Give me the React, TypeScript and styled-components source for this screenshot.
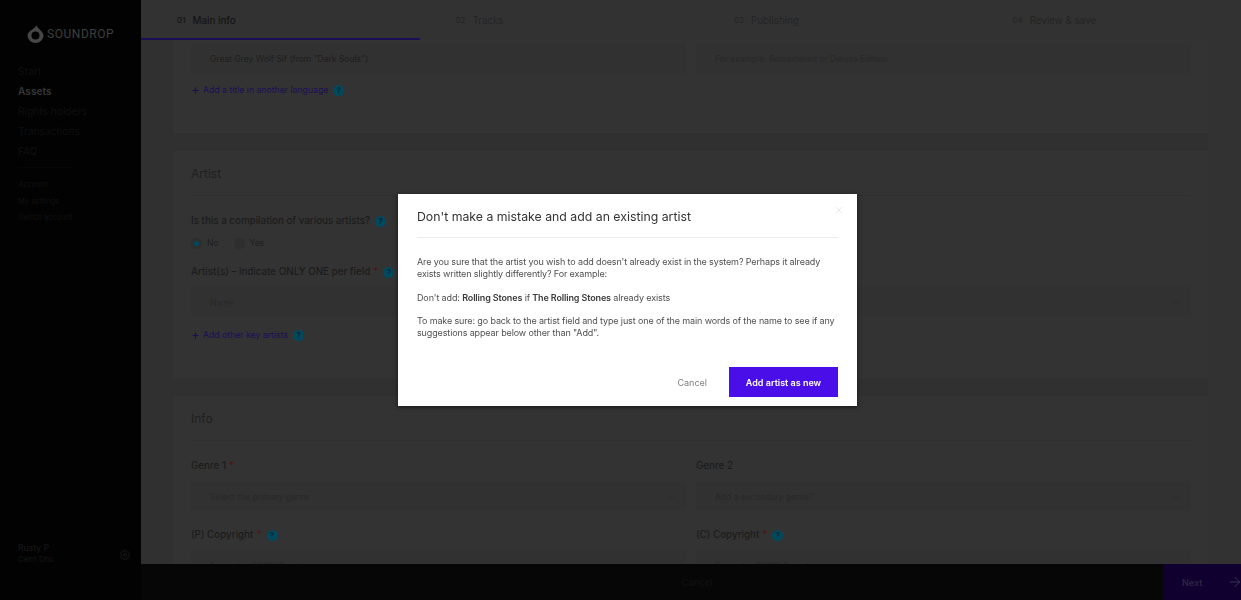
import React from "react";
import styled, { createGlobalStyle } from "styled-components";
import { Settings, ChevronDown, X, ArrowRight, Plus } from "lucide-react";

const Global = createGlobalStyle`
  html, body { margin: 0; padding: 0; height: 100%; background: #303030; }
  body { font-family: Inter, "Liberation Sans", sans-serif; overflow: hidden; }
  #root { height: 600px; }
  * { box-sizing: border-box; }
`;

const Page = styled.div`display: flex; width: 1241px; height: 600px; overflow: hidden;`;

const Sidebar = styled.aside`
  width: 141px; flex: none; background: #020202; padding: 24px 0 0 18px;
  display: flex; flex-direction: column; height: 600px;
`;
const Logo = styled.div`display: flex; align-items: center; gap: 3px; margin-left: 9px; height: 20px; margin-bottom: 17px;`;
const LogoText = styled.span`
  font-family: Roboto, sans-serif; font-size: 12px; letter-spacing: 0.55px; color: #3e3e3e; line-height: 20px;
`;
const NavItem = styled.div<{ $active?: boolean }>`
  font-size: 10.2px; line-height: 20px; height: 20px; color: ${p => (p.$active ? "#363636" : "#0f0f0f")};
  font-weight: ${p => (p.$active ? 600 : 400)};
`;
const NavDivider = styled.div`width: 54px; height: 1px; background: #060606; margin: 6px 0 9px;`;
const SubItem = styled.div`font-size: 7.5px; line-height: 16.5px; height: 16.5px; color: #111111;`;
const UserBlock = styled.div`margin-top: auto; margin-bottom: 34px; display: flex; align-items: center; justify-content: space-between; padding-right: 10px;`;
const UserName = styled.div`font-size: 8.5px; line-height: 12px; color: #161616; font-weight: 500;`;
const UserOrg = styled.div`font-size: 7.5px; line-height: 12px; color: #161616;`;
const Gear = styled(Settings)`color: #181818; margin-top: 2px;`;

const Main = styled.main`flex: 1; min-width: 0; display: flex; flex-direction: column; height: 600px;`;
const Tabs = styled.nav`display: flex; height: 40px; flex: none; background: #323232; overflow: hidden;`;
const Tab = styled.div<{ $active?: boolean }>`
  width: 278.5px; flex: none; padding: 2px 0 0 36px; display: flex; align-items: center; gap: 7px; height: 40px;
  border-bottom: 2px solid ${p => (p.$active ? "#1c0f58" : "#323232")};
  font-size: 9.8px; color: ${p => (p.$active ? "#141414" : "#242424")}; font-weight: ${p => (p.$active ? 500 : 400)};
`;
const TabNum = styled.span`font-size: 8px;`;

const Scroll = styled.div`flex: 1; min-height: 0; overflow: hidden; display: flex; background: #303030;`;
const Content = styled.div`flex: 1; min-width: 0; padding: 0 0 0 32px; display: flex; flex-direction: column; gap: 18px;`;
const Gutter = styled.div`width: 33px; flex: none; background: #323232;`;
const Card = styled.section<{ $h: number }>`
  background: #333333; padding: 0 17px 0 18px; height: ${p => p.$h}px; flex: none;
`;
const CardTitle = styled.h2`
  margin: 0 0 18px; font-size: 12px; font-weight: 400; color: #202020; height: 45px; line-height: 45px;
  border-bottom: 1px solid #2f2f2f;
`;
const Row = styled.div`display: grid; grid-template-columns: 495px 495px; column-gap: 10px;`;
const Label = styled.div`
  display: flex; align-items: center; gap: 5px; font-size: 9.8px; font-weight: 500; color: #1c1c1c; line-height: 14px; height: 14px;
`;
const Spacer = styled.div<{ $h: number }>`height: ${p => p.$h}px;`;
const Star = styled.span`color: #501414; margin-left: -2px;`;
const Help = styled.span`
  width: 11px; height: 11px; border-radius: 50%; background: #00495f; color: #10262e; font-size: 8px; font-weight: 700;
  display: inline-flex; align-items: center; justify-content: center; line-height: 1; flex: none;
`;
const Field = styled.div<{ $mt?: number }>`
  height: 30px; background: #313131; padding: 1px 10px 0 19px; display: flex; align-items: center; justify-content: space-between;
  margin-top: ${p => p.$mt ?? 0}px; font-size: 8.5px; color: #282828;
`;
const FieldValue = styled.span`color: #1e1e1e;`;
const Chevron = styled(ChevronDown)`color: #282828;`;
const AddLink = styled.div<{ $mt: number }>`
  display: flex; align-items: center; gap: 3px; margin-top: ${p => p.$mt}px; font-size: 8.7px; color: #1c0f58; height: 12px;
`;
const AddHelp = styled(Help)`margin-left: 2px;`;
const RadioRow = styled.div`display: flex; align-items: center; gap: 15px; margin-top: 8px; height: 14px;`;
const RadioItem = styled.div`display: flex; align-items: center; gap: 5px; font-size: 8.5px; color: #1e1e1e;`;
const Radio = styled.span<{ $on?: boolean }>`
  width: 11px; height: 11px; border-radius: 50%; background: #2e2e2e; display: inline-flex; align-items: center; justify-content: center;
  &::after { content: ""; width: 5px; height: 5px; border-radius: 50%; background: ${p => (p.$on ? "#00495f" : "transparent")}; }
`;

const Bottom = styled.footer`height: 36px; flex: none; background: #060606; display: flex;`;
const BottomCancel = styled.div`flex: 1; display: flex; align-items: center; justify-content: center; font-size: 9.5px; color: #121212; padding-left: 90px;`;
const NextBtn = styled.div`
  width: 78px; flex: none; background: #0f0030; color: #2a2540; font-size: 9px; font-weight: 600; display: flex; align-items: center; padding-left: 19px; gap: 25px; overflow: hidden;
`;
const NextArrow = styled(ArrowRight)`color: #3a3650; flex: none;`;

const Backdrop = styled.div`position: fixed; inset: 0; display: flex; align-items: center; justify-content: center; padding-left: 14px;`;
const Modal = styled.div`
  position: relative; width: 459px; height: 212px; background: #fff; padding: 0 19px; box-shadow: 0 1px 4px rgba(0,0,0,.6); display: flex; flex-direction: column;
`;
const ModalTitle = styled.h3`
  margin: 0; height: 44px; line-height: 45px; font-size: 12.3px; font-weight: 400; color: #333; border-bottom: 1px solid #ececec; flex: none;
`;
const CloseBtn = styled(X)`position: absolute; top: 11px; right: 13px; color: #d8d8d8;`;
const ModalBody = styled.div`padding-top: 18px; font-size: 9px; letter-spacing: -0.13px; line-height: 12px; color: #505050; flex: 1;`;
const Para = styled.p<{ $mb?: number }>`margin: 0 0 ${p => p.$mb ?? 12}px;`;
const Strong = styled.strong`font-weight: 600; color: #3a3a3a;`;
const ModalFoot = styled.div`display: flex; align-items: center; justify-content: flex-end; gap: 22px; margin: 0 0 9px;`;
const ModalCancel = styled.span`font-size: 9px; color: #808080;`;
const Primary = styled.div`
  width: 109px; height: 30px; background: #4a0fe8; color: #fff; font-size: 9px; font-weight: 600; display: flex; align-items: center; justify-content: center;
`;

const tabs = ["Main info", "Tracks", "Publishing", "Review & save"];

export default function App() {
  return (
    <>
      <Global />
      <Page>
        <Sidebar>
          <Logo>
            <svg width="17" height="18" viewBox="0 0 17 18" aria-hidden>
              <path fillRule="evenodd" fill="#474747" d="M9.5 0C9.5 3 16.5 6 16.5 10.5a8 7.5 0 0 1-16 0C.5 6 8 4 9.5 0ZM8.5 6.5a4 4 0 1 0 0 8 4 4 0 0 0 0-8Z" />
            </svg>
            <LogoText>SOUNDROP</LogoText>
          </Logo>
          <NavItem>Start</NavItem>
          <NavItem $active>Assets</NavItem>
          <NavItem>Rights holders</NavItem>
          <NavItem>Transactions</NavItem>
          <NavItem>FAQ</NavItem>
          <NavDivider />
          <SubItem>Account</SubItem>
          <SubItem>My settings</SubItem>
          <SubItem>Switch account</SubItem>
          <UserBlock>
            <div>
              <UserName>Rusty P</UserName>
              <UserOrg>Cairn Dhu</UserOrg>
            </div>
            <Gear size={12} />
          </UserBlock>
        </Sidebar>
        <Main>
          <Tabs>
            {tabs.map((t, i) => (
              <Tab key={t} $active={i === 0}>
                <TabNum>0{i + 1}</TabNum>
                <span>{t}</span>
              </Tab>
            ))}
          </Tabs>
          <Scroll>
            <Content>
              <Card $h={93}>
                <Row>
                  <Field $mt={3}><FieldValue>Great Grey Wolf Sif (from "Dark Souls")</FieldValue></Field>
                  <Field $mt={3}>For example: Remastered or Deluxe Edition</Field>
                </Row>
                <AddLink $mt={11}><Plus size={9} strokeWidth={3} />Add a title in another language<AddHelp>?</AddHelp></AddLink>
              </Card>
              <Card $h={227}>
                <CardTitle>Artist</CardTitle>
                <Label>Is this a compilation of various artists? <Help>?</Help></Label>
                <RadioRow>
                  <RadioItem><Radio $on />No</RadioItem>
                  <RadioItem><Radio />Yes</RadioItem>
                </RadioRow>
                <Spacer $h={15} />
                <Row>
                  <Label>Artist(s) – indicate ONLY ONE per field <Star>*</Star> <Help>?</Help></Label>
                  <span />
                  <Field $mt={8}>Name</Field>
                  <Field $mt={8}><span /><Chevron size={10} /></Field>
                </Row>
                <AddLink $mt={12}><Plus size={9} strokeWidth={3} />Add other key artists<AddHelp>?</AddHelp></AddLink>
              </Card>
              <Card $h={200}>
                <CardTitle>Info</CardTitle>
                <Row>
                  <Label>Genre 1 <Star>*</Star></Label>
                  <Label>Genre 2</Label>
                  <Field $mt={8}>Select the primary genre<Chevron size={10} /></Field>
                  <Field $mt={8}>Add a secondary genre?<Chevron size={10} /></Field>
                </Row>
                <Spacer $h={17} />
                <Row>
                  <Label>(P) Copyright <Star>*</Star> <Help>?</Help></Label>
                  <Label>(C) Copyright <Star>*</Star> <Help>?</Help></Label>
                  <Field $mt={8}>Example: (2020) Sony Inc</Field>
                  <Field $mt={8}>Example: (2020) Sony Inc</Field>
                </Row>
              </Card>
            </Content>
            <Gutter />
          </Scroll>
          <Bottom>
            <BottomCancel>Cancel</BottomCancel>
            <NextBtn>Next<NextArrow size={16} strokeWidth={1.5} /></NextBtn>
          </Bottom>
        </Main>
      </Page>
      <Backdrop>
        <Modal>
          <ModalTitle>Don't make a mistake and add an existing artist</ModalTitle>
          <CloseBtn size={10} strokeWidth={1.5} />
          <ModalBody>
            <Para>Are you sure that the artist you wish to add doesn't already exist in the system? Perhaps it already exists written slightly differently? For example:</Para>
            <Para $mb={11}>Don't add: <Strong>Rolling Stones</Strong> if <Strong>The Rolling Stones</Strong> already exists</Para>
            <Para>To make sure: go back to the artist field and type just one of the main words of the name to see if any suggestions appear below other than "Add".</Para>
          </ModalBody>
          <ModalFoot>
            <ModalCancel>Cancel</ModalCancel>
            <Primary>Add artist as new</Primary>
          </ModalFoot>
        </Modal>
      </Backdrop>
    </>
  );
}
